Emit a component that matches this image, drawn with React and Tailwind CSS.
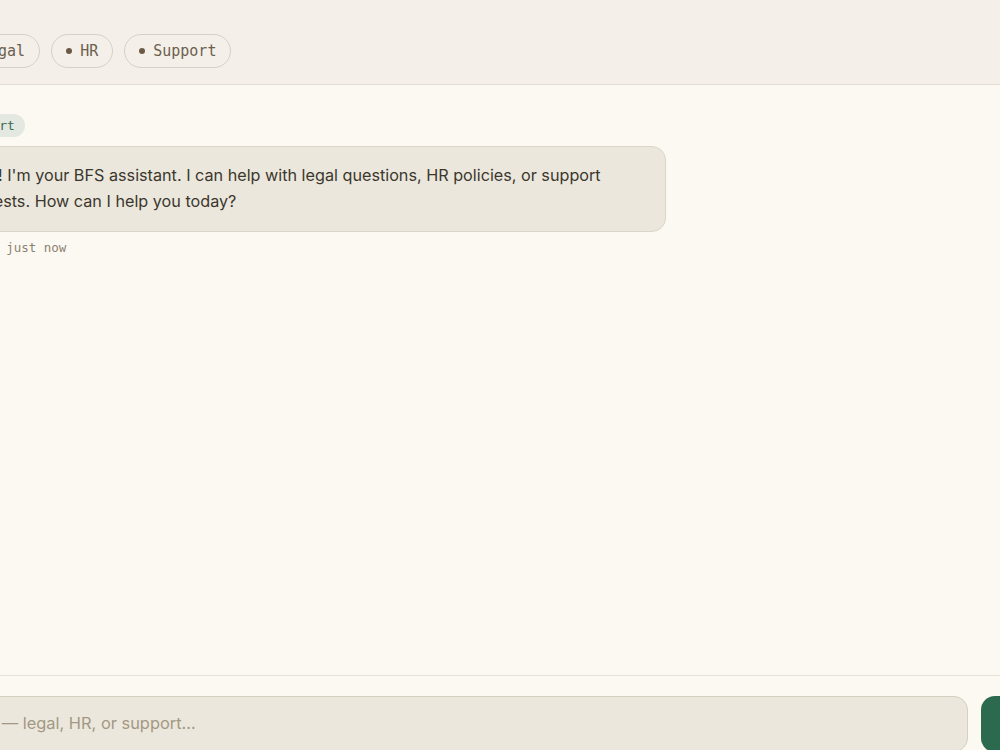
import React from 'react'

const topics = ['Legal', 'HR', 'Support']

const mono = { fontFamily: '"DejaVu Sans Mono", "Liberation Mono", monospace' }
const sans = { fontFamily: 'Inter, "Noto Sans", sans-serif' }

export default function App() {
  return (
    <div className="w-[1000px] h-[750px] overflow-hidden bg-[#fcf9f2]">
      <div className="-ml-[140px] w-[1203px] h-[782px] flex flex-col" style={sans}>
        {/* header */}
        <header className="bg-[#f4efe8] border-b border-[#e6dfd5] pl-[91px] pr-[30px] pt-[34px] pb-[16px]">
          <div className="flex items-center gap-[11px]">
            {topics.map((t) => (
              <button
                key={t}
                className="h-[34px] flex items-center gap-[8px] px-[14px] rounded-full border border-[#d8d0c4] text-[15px] text-[#6b604f]"
                style={mono}
              >
                <span className="w-[6px] h-[6px] rounded-full bg-[#6b5a45]" />
                {t}
              </button>
            ))}
          </div>
        </header>

        {/* messages */}
        <main className="flex-1 pl-[78px] pr-[30px] pt-[29px]">
          <div className="flex flex-col items-start">
            <span
              className="ml-[12px] h-[23px] flex items-center px-[10px] rounded-full bg-[#e3e9e1] text-[13px] text-[#3f6a55]"
              style={mono}
            >
              Support
            </span>
            <div className="mt-[9px] max-w-[728px] rounded-[14px] border border-[#ddd6c8] bg-[#ebe7dd] px-[20px] pt-[15px] pb-[17px] text-[16.2px] leading-[26px] text-[#3b372d]">
              Hello! I'm your BFS assistant. I can help with legal questions, HR policies, or support requests. How can I help you today?
            </div>
            <div className="mt-[7px] pl-[23px] text-[12.5px] text-[#8c8271]" style={mono}>
              BFS · just now
            </div>
          </div>
        </main>

        {/* composer */}
        <footer className="border-t border-[#e8e1d6] pl-[2px] pr-[30px] pt-[20px] pb-[30px] flex items-start gap-[13px]">
          <div className="flex-1 h-[56px] rounded-[14px] border border-[#d6cebf] bg-[#ebe7dd] flex items-center px-[20px] pb-[2px] text-[16.4px] text-[#a39883]">
            Ask a question — legal, HR, or support…
          </div>
          <button className="w-[52px] h-[56px] rounded-[14px] bg-[#2c6a50]" />
        </footer>
      </div>
    </div>
  )
}
